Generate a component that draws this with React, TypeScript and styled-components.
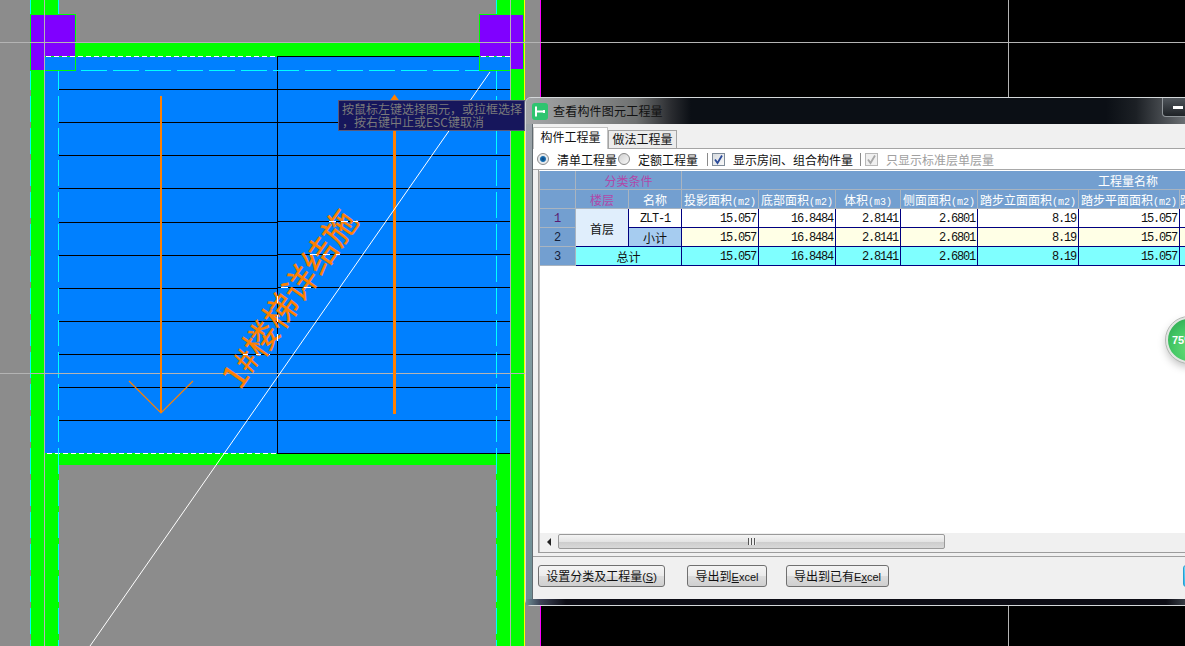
import React from 'react';
import styled, { createGlobalStyle } from 'styled-components';

const GlobalStyle = createGlobalStyle`
  html, body {
    margin: 0;
    padding: 0;
    background: #000;
  }
  body {
    font-family: "Noto Sans CJK SC", "Liberation Sans", sans-serif;
    font-size: 12px;
    overflow: hidden;
  }
`;

const Desktop = styled.div`
  position: relative;
  width: 1185px;
  height: 646px;
  overflow: hidden;
  background: #000;
`;

const CadCanvas = styled.svg`
  display: block;
  width: 1185px;
  height: 646px;
`;

const HoverHint = styled.div`
  position: absolute;
  left: 338px;
  top: 100px;
  width: 187px;
  height: 31px;
  box-sizing: border-box;
  padding: 1px 0 0 3px;
  background: #16165c;
  border: 1px solid #5a5a78;
  color: #7b7b7b;
  font-size: 12px;
  line-height: 13px;
  white-space: nowrap;
  overflow: hidden;
`;

const Dialog = styled.div`
  position: absolute;
  left: 525px;
  top: 97px;
  width: 720px;
  height: 509px;
  box-sizing: border-box;
  display: flex;
  flex-direction: column;
  padding: 0 0 0 6px;
  border: 1px solid #d4d8da;
  border-radius: 6px 6px 0 6px;
  background: linear-gradient(180deg, #9fa3a8 0, #8aa0a6 30%, #6d8e94 100%);
`;

const TitleBar = styled.div`
  flex: 0 0 26px;
  margin: 0 0 0 -6px;
  padding-left: 6px;
  display: flex;
  align-items: center;
  gap: 5px;
  border-radius: 5px 5px 0 0;
  background: linear-gradient(
    90deg,
    #a4a6a8 0,
    #8a8c8c 60px,
    #6e7070 110px,
    #2a2c30 145px,
    #0b0f15 165px,
    #0b0f15 580px,
    #1c2025 610px,
    #6c7074 660px
  );
  color: #111;
  font-size: 12px;
  letter-spacing: 0.2px;
`;

const TitleText = styled.span`
  margin-top: -2px;
`;

const MinimizeButton = styled.div`
  position: absolute;
  left: 636px;
  top: 0;
  width: 60px;
  height: 19px;
  box-sizing: border-box;
  border: 1px solid #8f9599;
  border-top: 0;
  border-radius: 0 0 4px 4px;
  background: linear-gradient(180deg, #50565c 0, #1e2226 100%);

  &::after {
    content: '';
    position: absolute;
    left: 10px;
    top: 8px;
    width: 10px;
    height: 3px;
    background: #fff;
  }
`;

const ClientArea = styled.div`
  flex: 1;
  display: flex;
  flex-direction: column;
  min-height: 0;
  background: #f0f0f0;
  border-left: 1px solid #606a70;
`;

const TabStrip = styled.div`
  flex: 0 0 24px;
  display: flex;
  align-items: flex-end;
`;

const Tab = styled.div<{ $active?: boolean }>`
  position: relative;
  box-sizing: border-box;
  height: ${(p) => (p.$active ? 22 : 18)}px;
  width: ${(p) => (p.$active ? 75 : 69)}px;
  margin-bottom: ${(p) => (p.$active ? -1 : 0)}px;
  border: 1px solid ${(p) => (p.$active ? '#c4c4c4' : '#a4a4a4')};
  border-bottom: 0;
  background: ${(p) => (p.$active ? '#fff' : '#ececec')};
  color: #111;
  font-size: 12px;
  line-height: ${(p) => (p.$active ? 18 : 15)}px;
  text-align: center;
  white-space: nowrap;
`;

const OptionRow = styled.div`
  flex: 0 0 22px;
  box-sizing: border-box;
  display: flex;
  align-items: center;
  padding: 0 0 0 4px;
  background: #fff;
  border-top: 1px solid #a4a4a4;
  border-bottom: 1px solid #a8a8a8;
  font-size: 12px;
  white-space: nowrap;
`;

const Radio = styled.span<{ $on?: boolean }>`
  flex: none;
  box-sizing: border-box;
  width: 12px;
  height: 12px;
  margin-left: ${(p) => (p.$on ? 0 : 1)}px;
  border-radius: 50%;
  border: 1px solid #8a8a8a;
  background: ${(p) =>
    p.$on
      ? 'radial-gradient(circle, #0a3f7a 0, #1a6fb0 35%, #e4e8ec 50%, #f4f4f4 100%)'
      : 'linear-gradient(135deg, #d0d0d0, #f8f8f8)'};
`;

const OptionLabel = styled.span<{ $off?: boolean; $gap: number }>`
  margin-left: ${(p) => p.$gap}px;
  color: ${(p) => (p.$off ? '#a0a0a0' : '#111')};
`;

const Divider = styled.span<{ $left: number }>`
  flex: none;
  width: 1px;
  height: 13px;
  margin: 0 4px 0 ${(p) => p.$left}px;
  background: #8a8a8a;
`;

const CheckBox = styled.span<{ $off?: boolean }>`
  flex: none;
  box-sizing: border-box;
  width: 13px;
  height: 13px;
  display: flex;
  align-items: center;
  justify-content: center;
  border: 1px solid ${(p) => (p.$off ? '#b8b8b8' : '#7f8c9a')};
  background: ${(p) => (p.$off ? '#f0f0f0' : 'linear-gradient(135deg, #d8dce0, #f8f8f8)')};
`;

const GridFrame = styled.div`
  flex: 1;
  min-height: 0;
  display: flex;
  flex-direction: column;
  margin: 0 0 3px 5px;
  box-sizing: border-box;
  padding: 1px 0 0 0;
  background: #fff;
  border-left: 1px solid #9c9c9c;
  border-bottom: 1px solid #9c9c9c;
`;

const TableArea = styled.div`
  flex: 1;
  min-height: 0;
  overflow: hidden;
  border-left: 1px solid #bcbcbc;
`;

const Sheet = styled.table`
  table-layout: fixed;
  border-collapse: separate;
  border-spacing: 0;
  font-size: 12px;
`;

const HeadCell = styled.th<{ $tone?: string }>`
  height: 16px;
  padding: 2px 0 0 0;
  box-sizing: content-box;
  background: #739fd0;
  border-right: 1px solid #a9b4c0;
  border-bottom: 1px solid #a9b4c0;
  color: ${(p) => p.$tone || '#fff'};
  font-weight: 400;
  line-height: 16px;
  text-align: center;
  white-space: nowrap;
  overflow: hidden;
`;

const Unit = styled.span`
  font-family: "Liberation Mono", monospace;
  font-size: 10px;
  line-height: 0;
  letter-spacing: 0;
`;

const RowLabel = styled.td<{ $first?: boolean }>`
  height: 16px;
  padding: 2px 0 0 0;
  background: #739fd0;
  border-right: 1px solid #a9b4c0;
  border-bottom: 1px solid #a9b4c0;
  color: ${(p) => (p.$first ? '#5a1a70' : '#14203a')};
  font-family: "Liberation Mono", monospace;
  font-size: 12px;
  line-height: 16px;
  text-align: center;
`;

const NameCell = styled.td<{ $fill: string; $mono?: boolean }>`
  height: 16px;
  padding: 2px 0 0 0;
  background: ${(p) => p.$fill};
  border-right: 1px solid #000080;
  border-bottom: 1px solid #000080;
  color: #111;
  font-family: ${(p) => (p.$mono ? '"Liberation Mono", monospace' : 'inherit')};
  font-size: 12px;
  letter-spacing: ${(p) => (p.$mono ? -1.2 : 0)}px;
  line-height: 16px;
  text-align: center;
  white-space: nowrap;
`;

const ValueCell = styled.td<{ $fill: string }>`
  height: 16px;
  padding: 2px 2px 0 0;
  background: ${(p) => p.$fill};
  border-right: 1px solid #000080;
  border-bottom: 1px solid #000080;
  color: #111;
  font-family: "Liberation Mono", monospace;
  font-size: 12px;
  letter-spacing: -1.2px;
  line-height: 16px;
  text-align: right;
  white-space: nowrap;
  overflow: hidden;
`;

const ScrollBar = styled.div`
  flex: 0 0 19px;
  box-sizing: border-box;
  display: flex;
  align-items: flex-start;
  padding-top: 1px;
  background: #f0f0f0;
  border-left: 1px solid #bcbcbc;
`;

const ScrollArrow = styled.div`
  flex: 0 0 18px;
  height: 15px;
  display: flex;
  align-items: center;
  justify-content: center;

  &::before {
    content: '';
    border-style: solid;
    border-width: 4px 4px 4px 0;
    border-color: transparent #222 transparent transparent;
  }
`;

const ScrollThumb = styled.div`
  flex: 0 0 387px;
  height: 15px;
  box-sizing: border-box;
  display: flex;
  align-items: center;
  justify-content: center;
  border: 1px solid #9a9a9a;
  border-radius: 2px;
  background: linear-gradient(180deg, #f4f4f4 0, #e4e4e4 50%, #cdcdcd 55%, #d8d8d8 100%);
`;

const ThumbGrip = styled.span`
  width: 8px;
  height: 7px;
  background: repeating-linear-gradient(90deg, #555 0, #555 1px, #eee 1px, #eee 3px);
`;

const Footer = styled.div`
  flex: 0 0 43px;
  box-sizing: border-box;
  display: flex;
  align-items: flex-start;
  padding: 8px 0 0 5px;
  border-top: 1px solid #a0a0a0;
`;

const ActionButton = styled.button<{ $width: number; $left?: number; $focus?: boolean }>`
  flex: none;
  box-sizing: border-box;
  width: ${(p) => p.$width}px;
  height: 22px;
  margin-left: ${(p) => p.$left || 0}px;
  padding: 0;
  border: 1px solid ${(p) => (p.$focus ? '#2a9fd0' : '#707070')};
  border-radius: 3px;
  background: ${(p) =>
    p.$focus
      ? 'linear-gradient(180deg, #6fd6fa 0, #2fb8ec 100%)'
      : 'linear-gradient(180deg, #f4f4f4 0, #ebebeb 48%, #dcdcdc 52%, #cfcfcf 100%)'};
  color: #111;
  font-family: inherit;
  font-size: 12px;
  line-height: 18px;
  white-space: nowrap;
`;

const Latin = styled.span`
  font-family: "Liberation Sans", sans-serif;
  font-size: 11px;
`;

const FrameBase = styled.div`
  flex: 0 0 6px;
  margin-left: -6px;
  background: linear-gradient(90deg, #6d8e94 0, #3e4458 14px, #0c0c14 40px, #0c0c14 640px, #3a4048 660px);
`;

const FloatingBall = styled.div`
  position: absolute;
  left: 1166px;
  top: 317px;
  width: 46px;
  height: 46px;
  box-sizing: border-box;
  padding: 15px 0 0 4px;
  border: 2px solid #e2e6e2;
  outline: 1px solid #b4b8b4;
  border-radius: 50%;
  background: radial-gradient(circle at 60% 70%, #6fe07a 0, #43c765 55%, #2aa04e 100%);
  box-shadow: 0 4px 8px rgba(0, 0, 0, 0.25);
  color: #fff;
  font-family: "Liberation Sans", sans-serif;
  font-size: 11px;
  font-weight: 700;
  line-height: 12px;
`;

const GRAY = '#8c8c8c';
const GREEN = '#00ff00';
const BLUE = '#0080ff';
const PURPLE = '#8000ff';
const ORANGE = '#ff8000';
const CYAN = '#00ffff';
const GUIDE = '#b4b4b4';

const leftTreads = [89, 122, 155, 188, 222, 255, 288, 321, 354, 387, 420];
const rightTreads = [89, 122, 155, 188, 221, 254, 287, 321, 354, 387, 420];

const CadDrawing = () => (
  <CadCanvas viewBox="0 0 1185 646" shapeRendering="crispEdges">
    <rect x="0" y="0" width="540" height="646" fill={GRAY} />
    <rect x="540" y="0" width="1" height="646" fill="#ff00ff" />

    {/* walls */}
    <rect x="31" y="0" width="13" height="646" fill={GREEN} />
    <rect x="45" y="0" width="13" height="16" fill={GREEN} />
    <rect x="497" y="0" width="13" height="16" fill={GREEN} />
    <rect x="511" y="0" width="13" height="646" fill={GREEN} />
    <rect x="524" y="0" width="1" height="646" fill="#ffff00" />
    <rect x="45" y="43" width="465" height="14" fill={GREEN} />
    <rect x="45" y="453" width="466" height="12" fill={GREEN} />
    <rect x="45" y="465" width="14" height="181" fill={GREEN} />
    <rect x="496" y="465" width="15" height="181" fill={GREEN} />

    {/* landing */}
    <rect x="45" y="57" width="465" height="396" fill={BLUE} />

    {/* stair treads */}
    {leftTreads.map((y) => (
      <rect key={`l${y}`} x="59" y={y} width="218" height="1" fill="#000" />
    ))}
    {rightTreads.map((y) => (
      <rect key={`r${y}`} x="278" y={y} width="232" height="1" fill="#000" />
    ))}
    <rect x="277" y="56" width="1" height="398" fill="#000" />
    <rect x="278" y="56" width="202" height="1" fill="#000" />
    <rect x="278" y="453" width="232" height="1" fill="#000" />
    <line x1="46" y1="56.5" x2="277" y2="56.5" stroke="#fff" strokeDasharray="5 3" />
    <line x1="47" y1="453.5" x2="277" y2="453.5" stroke="#fff" strokeDasharray="5 3" />

    {/* axes */}
    <line x1="30.5" y1="0" x2="30.5" y2="646" stroke={CYAN} strokeDasharray="26 6" />
    <line x1="58.5" y1="0" x2="58.5" y2="646" stroke={CYAN} strokeDasharray="26 6" />
    <line x1="496.5" y1="0" x2="496.5" y2="646" stroke={CYAN} strokeDasharray="26 6" />
    <line x1="81" y1="70.5" x2="480" y2="70.5" stroke={CYAN} strokeDasharray="26 6" />

    {/* columns */}
    <rect x="45" y="57" width="30" height="13" fill={BLUE} />
    <rect x="480" y="57" width="30" height="13" fill={BLUE} />
    <rect x="31" y="15" width="13" height="55" fill={PURPLE} />
    <rect x="45" y="15" width="30" height="41" fill={PURPLE} />
    <rect x="480" y="14" width="30" height="42" fill={PURPLE} />
    <rect x="511" y="14" width="12" height="55" fill={PURPLE} />
    <rect x="30.5" y="14.5" width="45" height="56" fill="none" stroke={GREEN} />
    <rect x="479.5" y="14.5" width="44" height="56" fill="none" stroke={GREEN} />
    <line x1="46" y1="56.5" x2="75" y2="56.5" stroke="#fff" strokeDasharray="5 3" />
    <line x1="481" y1="56.5" x2="510" y2="56.5" stroke="#fff" strokeDasharray="5 3" />

    {/* guide lines */}
    <rect x="44" y="0" width="1" height="646" fill={GUIDE} />
    <rect x="510" y="0" width="1" height="646" fill={GUIDE} />
    <rect x="0" y="42" width="1185" height="1" fill={GUIDE} />
    <rect x="0" y="373" width="525" height="1" fill={GUIDE} />
    <rect x="1008" y="0" width="1" height="646" fill={GUIDE} />

    {/* walking direction */}
    <rect x="160" y="96" width="2" height="317" fill={ORANGE} />
    <rect x="393" y="97" width="3" height="317" fill={ORANGE} />
    <g shapeRendering="auto">
      <path d="M129 381 L161 413 L193 381" fill="none" stroke={ORANGE} strokeWidth="1.2" />
      <path d="M390 102 L394.5 96 L399 102" fill="none" stroke={ORANGE} strokeWidth="2" />
      <line x1="90" y1="646" x2="490" y2="72" stroke="#fff" strokeWidth="1" />
      <text
        transform="translate(240 391) rotate(-55)"
        fill={ORANGE}
        stroke={ORANGE}
        strokeWidth="0.3"
        fontFamily="'Noto Sans CJK SC', sans-serif"
        fontSize="34"
        fontWeight="400"
      >
        1#楼梯详结施
      </text>
    </g>
    <line x1="329" y1="221.5" x2="358" y2="221.5" stroke="#fff" strokeDasharray="7 5" />
    <line x1="310" y1="254.5" x2="340" y2="254.5" stroke="#fff" strokeDasharray="7 6" />
    <line x1="281" y1="287.5" x2="317" y2="287.5" stroke="#fff" strokeDasharray="7 16" />
    <line x1="243" y1="354.5" x2="270" y2="354.5" stroke="#fff" strokeDasharray="5 8" />
    <line x1="277.5" y1="296" x2="277.5" y2="342" stroke="#fff" strokeDasharray="7 12" />
  </CadCanvas>
);

const DialogIcon = () => (
  <svg width="16" height="17" viewBox="0 0 16 17">
    <rect x="0" y="0" width="16" height="17" rx="3" fill="#2fc46f" />
    <path d="M4 3.5V13.5M4 8.5H12M12 7V10" fill="none" stroke="#fff" strokeWidth="2" />
  </svg>
);

const CheckMark = ({ color }: { color: string }) => (
  <svg width="11" height="11" viewBox="0 0 11 11">
    <path d="M2 5.5L4.5 9L9 1.5" fill="none" stroke={color} strokeWidth="1.8" />
  </svg>
);

type SheetRow = {
  id: number;
  fill: string;
  values: string[];
};

const columns = [36, 53, 53, 77, 77, 65, 77, 101, 101, 397];

const heads: { name: string; unit: string }[] = [
  { name: '投影面积', unit: '(m2)' },
  { name: '底部面积', unit: '(m2)' },
  { name: '体积', unit: '(m3)' },
  { name: '侧面面积', unit: '(m2)' },
  { name: '踏步立面面积', unit: '(m2)' },
  { name: '踏步平面面积', unit: '(m2)' },
];

const values = ['15.057', '16.8484', '2.8141', '2.6801', '8.19', '15.057'];

const rows: SheetRow[] = [
  { id: 1, fill: '#ffffff', values },
  { id: 2, fill: '#ffffe6', values },
  { id: 3, fill: '#7fffff', values },
];

const QuantitySheet = () => (
  <Sheet style={{ width: columns.reduce((a, b) => a + b, 0) }}>
    <colgroup>
      {columns.map((w, i) => (
        <col key={i} width={w} />
      ))}
    </colgroup>
    <thead>
      <tr>
        <HeadCell />
        <HeadCell colSpan={2} $tone="#b048a8">
          分类条件
        </HeadCell>
        <HeadCell colSpan={7} style={{ textAlign: 'left', paddingLeft: 416 }}>
          工程量名称
        </HeadCell>
      </tr>
      <tr>
        <HeadCell />
        <HeadCell $tone="#b048a8">楼层</HeadCell>
        <HeadCell>名称</HeadCell>
        {heads.map((h) => (
          <HeadCell key={h.name}>
            {h.name}
            <Unit>{h.unit}</Unit>
          </HeadCell>
        ))}
        <HeadCell style={{ textAlign: 'left' }}>踏步侧面面积</HeadCell>
      </tr>
    </thead>
    <tbody>
      {rows.map((row) => (
        <tr key={row.id}>
          <RowLabel $first={row.id === 1}>{row.id}</RowLabel>
          {row.id === 1 && (
            <NameCell rowSpan={2} $fill="#e0eefc">
              首层
            </NameCell>
          )}
          {row.id === 1 && (
            <NameCell $fill="#ffffff" $mono>
              ZLT-1
            </NameCell>
          )}
          {row.id === 2 && <NameCell $fill="#a6ccf0">小计</NameCell>}
          {row.id === 3 && (
            <NameCell colSpan={2} $fill="#7fffff">
              总计
            </NameCell>
          )}
          {row.values.map((v, i) => (
            <ValueCell key={i} $fill={row.fill}>
              {v}
            </ValueCell>
          ))}
          <ValueCell $fill={row.fill} />
        </tr>
      ))}
    </tbody>
  </Sheet>
);

const App: React.FC = () => {
  return (
    <Desktop>
      <GlobalStyle />
      <CadDrawing />
      <HoverHint>
        按鼠标左键选择图元，或拉框选择
        <br />
        ，按右键中止或ESC键取消
      </HoverHint>
      <Dialog>
        <TitleBar>
          <DialogIcon />
          <TitleText>查看构件图元工程量</TitleText>
          <MinimizeButton />
        </TitleBar>
        <ClientArea>
          <TabStrip>
            <Tab $active>构件工程量</Tab>
            <Tab>做法工程量</Tab>
          </TabStrip>
          <OptionRow>
            <Radio $on />
            <OptionLabel $gap={8}>清单工程量</OptionLabel>
            <Radio />
            <OptionLabel $gap={8}>定额工程量</OptionLabel>
            <Divider $left={9} />
            <CheckBox>
              <CheckMark color="#2a4a9a" />
            </CheckBox>
            <OptionLabel $gap={8}>显示房间、组合构件量</OptionLabel>
            <Divider $left={7} />
            <CheckBox $off>
              <CheckMark color="#a8a8a8" />
            </CheckBox>
            <OptionLabel $gap={8} $off>
              只显示标准层单层量
            </OptionLabel>
          </OptionRow>
          <GridFrame>
            <TableArea>
              <QuantitySheet />
            </TableArea>
            <ScrollBar>
              <ScrollArrow />
              <ScrollThumb>
                <ThumbGrip />
              </ScrollThumb>
            </ScrollBar>
          </GridFrame>
          <Footer>
            <ActionButton $width={127}>
              设置分类及工程量
              <Latin>
                (<u>S</u>)
              </Latin>
            </ActionButton>
            <ActionButton $width={80} $left={22}>
              导出到
              <Latin>
                <u>E</u>xcel
              </Latin>
            </ActionButton>
            <ActionButton $width={103} $left={19}>
              导出到已有
              <Latin>
                E<u>x</u>cel
              </Latin>
            </ActionButton>
            <ActionButton $width={40} $left={294} $focus />
          </Footer>
        </ClientArea>
        <FrameBase />
      </Dialog>
      <FloatingBall>75%</FloatingBall>
    </Desktop>
  );
};

export default App;
